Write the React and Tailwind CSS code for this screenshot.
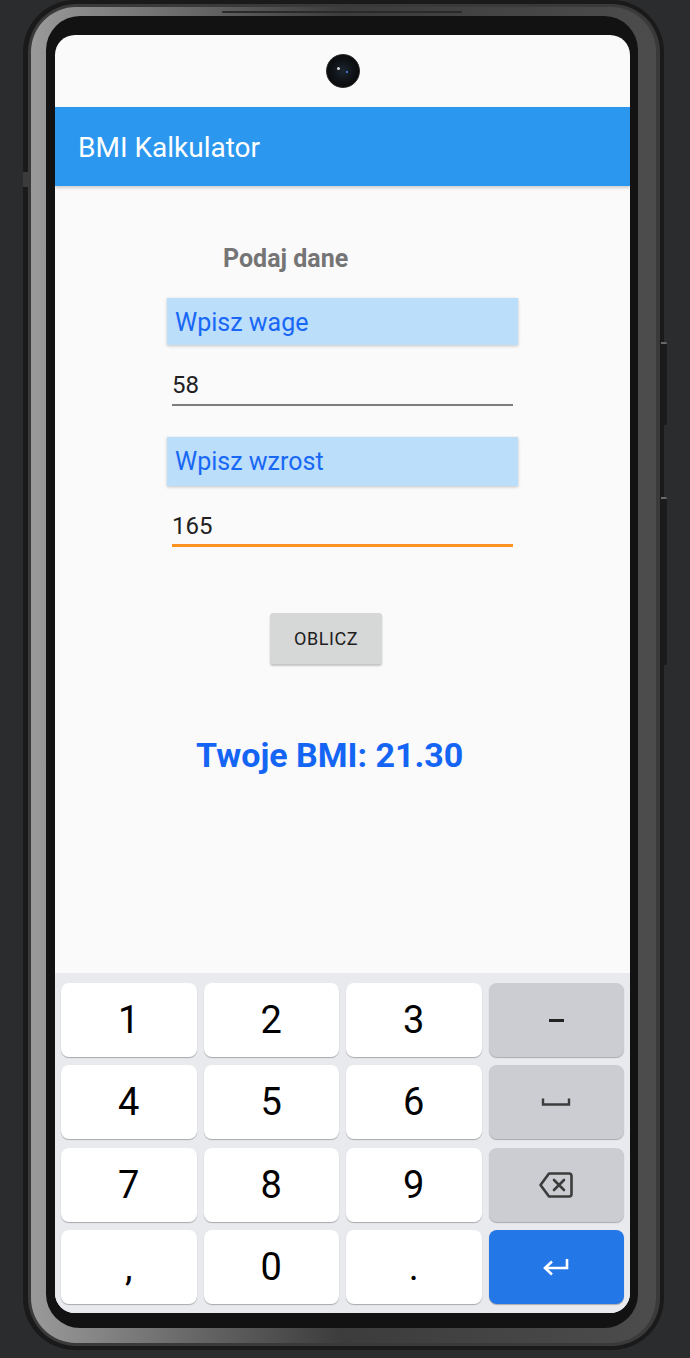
import { useState } from 'react';

const keys = [
    { label: '1' }, { label: '2' }, { label: '3' }, { label: 'dash', fn: true },
    { label: '4' }, { label: '5' }, { label: '6' }, { label: 'space', fn: true },
    { label: '7' }, { label: '8' }, { label: '9' }, { label: 'back', fn: true },
    { label: ',' }, { label: '0' }, { label: '.' }, { label: 'enter', enter: true },
];

const SpaceIcon = () => (
    <svg width="30" height="10" viewBox="0 0 30 10" fill="none">
        <path d="M2 1.5 V7.5 H28 V1.5" stroke="#3c3c3c" strokeWidth="2.4" />
    </svg>
);

const BackspaceIcon = () => (
    <svg width="38" height="30" viewBox="0 0 38 30" fill="none">
        <path d="M12 3.5 H32 a2.5 2.5 0 0 1 2.5 2.5 V24 a2.5 2.5 0 0 1 -2.5 2.5 H12 L3.5 15 Z" stroke="#3c3c3c" strokeWidth="2.6" strokeLinejoin="round" />
        <path d="M17 10 L27 20 M27 10 L17 20" stroke="#3c3c3c" strokeWidth="2.6" strokeLinecap="round" />
    </svg>
);

const EnterIcon = () => (
    <svg width="30" height="22" viewBox="0 0 30 22" fill="none">
        <path d="M26 3 V12 H5" stroke="#ffffff" strokeWidth="2.6" />
        <path d="M11 5.5 L4 12 L11 18.5" stroke="#ffffff" strokeWidth="2.6" strokeLinejoin="miter" />
    </svg>
);

const Key = ({ k }) => {
    let bg = 'bg-white';
    if (k.fn) bg = 'bg-[#cbcdd3]';
    if (k.enter) bg = 'bg-[#2377e6]';

    let content = <span className="text-[38px] leading-none text-black">{k.label}</span>;
    if (k.label === 'dash') content = <span className="block w-[15px] h-[3px] bg-[#222]" />;
    if (k.label === 'space') content = <SpaceIcon />;
    if (k.label === 'back') content = <BackspaceIcon />;
    if (k.label === 'enter') content = <EnterIcon />;

    return (
        <div className={`${bg} h-[74px] rounded-[8px] flex items-center justify-center shadow-[0_1px_1px_rgba(0,0,0,0.28)]`}>
            {content}
        </div>
    );
};

const App = () => {
    const [waga] = useState('58');
    const [wzrost] = useState('165');

    return (
        <div className="relative w-[690px] h-[1358px] bg-[#2b2c2e] overflow-hidden font-[Roboto,sans-serif]">
            {/* side buttons */}
            <div className="absolute left-[661px] top-[342px] w-[6px] h-[83px] rounded-r-[2px] bg-[#1b1b1b] border-t-2 border-[#6a6a6a]" />
            <div className="absolute left-[661px] top-[497px] w-[6px] h-[168px] rounded-r-[2px] bg-[#1b1b1b] border-t-2 border-[#6a6a6a]" />
            <div className="absolute left-[23px] top-[172px] w-[5px] h-[15px] bg-[#3b3b3b]" />

            {/* phone body */}
            <div className="ml-[23px] w-[641px] h-[1350px] rounded-[52px] bg-[#1a1a1a] pl-[5px] pt-[4px] pr-[4px] pb-[4px]">
                <div className="h-full rounded-[48px] bg-[#3a3a3a] pl-[3px] pt-[3px] pr-[4px] pb-[3px]">
                    <div className="h-full rounded-[45px] bg-linear-to-r from-[#9a9a9a] via-[#3c3c3c] to-[#4c4c4c] pl-[15px] pt-[9px] pr-[18px] pb-[15px]">
                        <div className="h-full rounded-[34px] bg-[#121212] pl-[9px] pt-[19px] pr-[8px] pb-[15px]">
                            {/* screen */}
                            <div className="h-full rounded-[20px] overflow-hidden bg-[#fafafa] flex flex-col">
                                {/* status area with camera */}
                                <div className="h-[72px] shrink-0 flex items-center justify-center">
                                    <div className="relative w-[34px] h-[34px] rounded-full bg-[radial-gradient(circle_at_50%_50%,#1c2530_0%,#0d0f12_55%,#050505_100%)] border border-[#2a2a2a]">
                                        <div className="absolute left-[10px] top-[12px] w-[3px] h-[3px] rounded-full bg-white/80" />
                                        <div className="absolute left-[19px] top-[16px] w-[2px] h-[2px] rounded-full bg-[#4a8cff]" />
                                    </div>
                                </div>

                                {/* app bar */}
                                <div className="relative z-10 h-[79px] shrink-0 bg-[#2b97ee] flex items-center pl-[23px] pt-[3px] shadow-[0_2px_3px_rgba(0,0,0,0.18)]">
                                    <h1 className="text-white text-[28px] leading-none">BMI Kalkulator</h1>
                                </div>

                                {/* content */}
                                <div className="flex-1 flex flex-col ml-[112px] w-[351px]">
                                    <p className="mt-[58px] pl-[56px] text-[25px] leading-[29px] font-bold text-[#757575]">Podaj dane</p>

                                    <div className="mt-[25px] h-[47px] bg-[#bbdefb] pl-[8px] pt-[10px] text-[25px] leading-[29px] text-[#1967f5] shadow-[0_1px_3px_rgba(0,0,0,0.22)]">
                                        Wpisz wage
                                    </div>
                                    <div className="mt-[26px] ml-[5px] w-[341px] pb-[5px] border-b-2 border-[#7d7d7d] text-[24px] leading-[28px] text-[#212121]">
                                        {waga}
                                    </div>

                                    <div className="mt-[31px] h-[49px] bg-[#bbdefb] pl-[8px] pt-[10px] text-[25px] leading-[29px] text-[#1967f5] shadow-[0_1px_3px_rgba(0,0,0,0.22)]">
                                        Wpisz wzrost
                                    </div>
                                    <div className="mt-[26px] ml-[5px] w-[341px] pb-[4px] border-b-[3px] border-[#ff9220] text-[24px] leading-[28px] text-[#212121]">
                                        {wzrost}
                                    </div>

                                    <button className="mt-[66px] ml-[103px] w-[112px] h-[51px] rounded-[3px] bg-[#d6d7d7] text-[18px] font-normal tracking-[0.03em] text-[#1e1e1e] shadow-[0_2px_2px_rgba(0,0,0,0.22)]">
                                        OBLICZ
                                    </button>

                                    <p className="mt-[71px] ml-[29px] text-[34px] leading-[40px] font-bold text-[#1565f5] whitespace-nowrap">
                                        Twoje BMI: 21.30
                                    </p>
                                </div>

                                {/* keyboard */}
                                <div className="h-[340px] shrink-0 bg-[#e8eaed] px-[6px] pt-[10px] pb-[9px] grid grid-cols-4 gap-x-[7px] gap-y-[8px]">
                                    {keys.map((k, i) => (
                                        <Key key={i} k={k} />
                                    ))}
                                </div>
                            </div>
                        </div>
                    </div>
                </div>
            </div>

            {/* top speaker line */}
            <div className="absolute left-[222px] top-[11px] w-[240px] h-[2px] rounded-full bg-[#2a2a2a]" />
        </div>
    );
};

export default App;
